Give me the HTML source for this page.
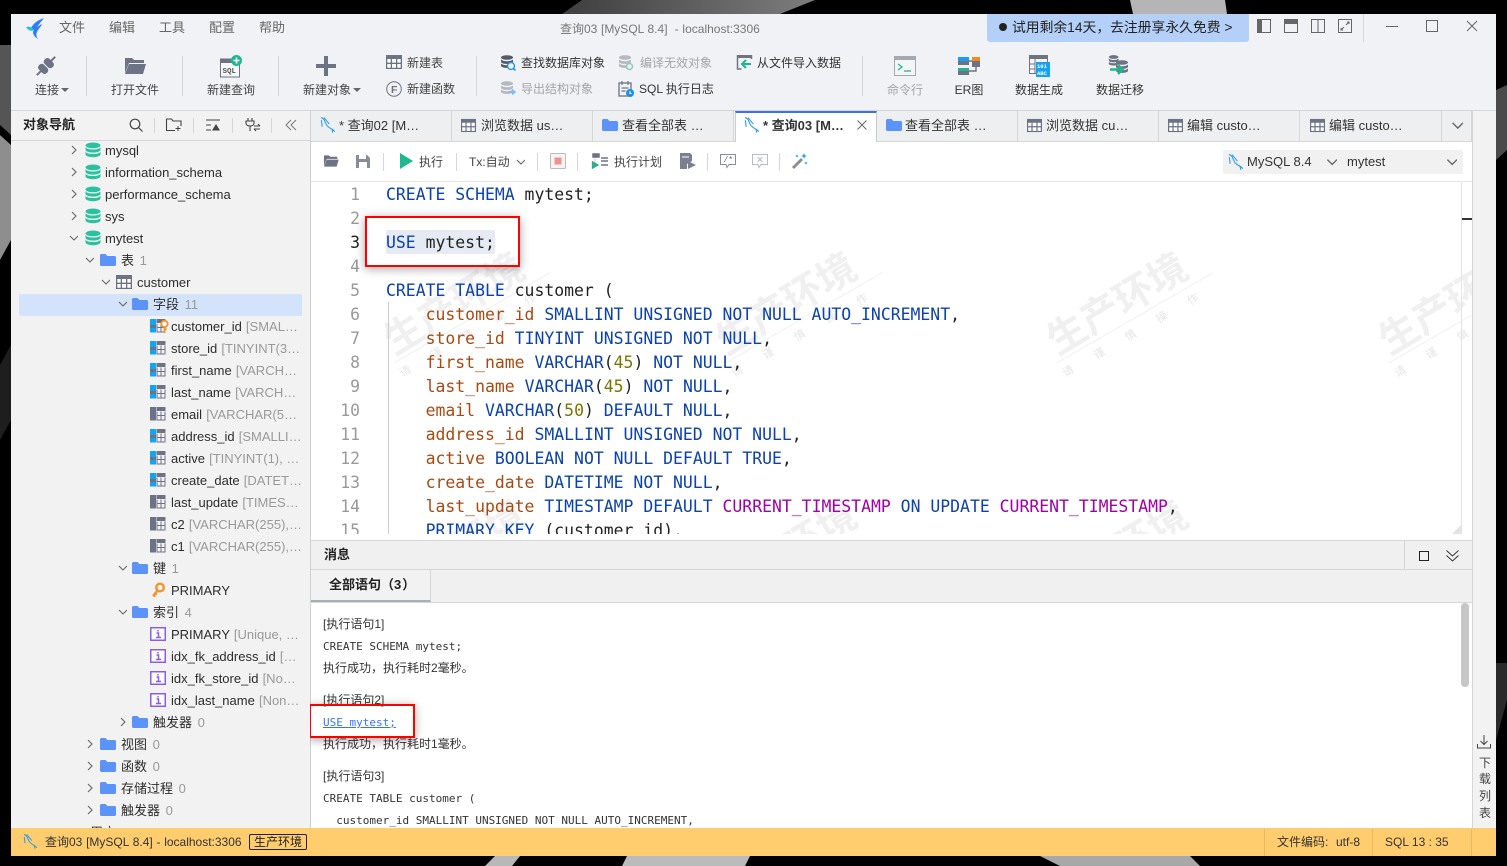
<!DOCTYPE html>
<html lang="zh"><head><meta charset="utf-8"><title>查询03</title>
<style>
*{box-sizing:border-box}
html,body{margin:0;padding:0;width:1507px;height:866px;overflow:hidden;background:#000}
body{font-family:"Liberation Sans","Noto Sans CJK TC",sans-serif;font-size:12px;color:#333;position:relative}
.t{position:absolute;white-space:nowrap;line-height:22px;height:22px}
.ic{position:absolute;overflow:visible}
.c{transform:translateX(-50%)}
.dv{position:absolute;width:1px;background:#d4d6da}
#win{position:absolute;left:11px;top:14px;width:1485px;height:842px;background:#f0f2f6;overflow:hidden}
#w{position:absolute;left:-11px;top:-14px;width:1507px;height:866px}
.lb{color:#444;font-size:12px}
.gr{color:#a2a4a8}
#side{position:absolute;left:11px;top:142px;width:299px;height:686px;background:#f2f2f2;overflow:hidden;font-size:13px;color:#333}
#side .t{color:#2c2c2c;margin-top:1px}
#side i{font-style:normal;color:#999;margin-left:.5px}
#side i.q{margin-left:2px}
.tab{position:absolute;top:111px;height:30px;width:141px;background:#eeeff1;border-right:1px solid #d6d6d6;font-size:13px;color:#333}
.tab span{position:absolute;left:28px;top:4px;line-height:22px;white-space:nowrap}
#ed{position:absolute;left:311px;top:183px;width:1161px;height:351px;background:#fff;overflow:hidden;font-family:"DejaVu Sans Mono",monospace;font-size:16.44px}
#ed .l{position:absolute;left:75px;height:24px;line-height:24px;white-space:pre;color:#222}
#ed .n{position:absolute;left:0;width:49px;text-align:right;height:24px;line-height:24px;color:#999}
.k{color:#0b42ab}.d{color:#a84a10}.m{color:#7c7400}.f{color:#a100a8}
.wm{position:absolute;font-size:39px;font-weight:bold;color:#f0f0f0;transform:rotate(-31deg);white-space:nowrap;font-family:"Liberation Sans","Noto Sans CJK SC",sans-serif;line-height:40px}
.ws{position:absolute;font-size:11px;color:#e6e6e6;transform:rotate(-30deg);white-space:nowrap;letter-spacing:25px;font-family:"Liberation Sans","Noto Sans CJK SC",sans-serif;border-top:1px solid #f0f0f0;padding-top:4px}
#msg{position:absolute;left:311px;top:603px;width:1161px;height:225px;background:#fff;overflow:hidden;color:#333}
#msg .t{left:12px;font-size:12px}
#msg .mo{font-family:"DejaVu Sans Mono",monospace;font-size:11px;white-space:pre;margin-top:1px}
.red{position:absolute;border:2px solid #f00;box-shadow:0 2px 9px rgba(0,0,0,.35)}
</style></head><body>
<svg width="0" height="0" style="position:absolute">
<defs>
<symbol id="folder" viewBox="0 0 16 16"><path d="M0 3.500C0 2.700.6 2 1.400 2h4.200l1.700 2h7.300c.8 0 1.400.6 1.400 1.400v7.200c0 .8-.6 1.400-1.400 1.400H1.400C.6 14 0 13.400 0 12.600z" fill="#5b93fb"/></symbol>
<symbol id="db" viewBox="0 0 16 16"><ellipse cx="8" cy="3.400" rx="7.500" ry="2.900" fill="#2cc19e"/><path d="M.5 5.200c1 1.500 3.800 2.300 7.500 2.300s6.500-.8 7.500-2.300v2.700c0 1.500-3.300 2.700-7.500 2.700S.5 9.400.5 7.900z" fill="#2cc19e"/><path d="M.5 9.700c1 1.500 3.800 2.300 7.500 2.300s6.500-.8 7.500-2.300v2.700c0 1.500-3.300 2.800-7.500 2.800S.5 13.900.5 12.400z" fill="#2cc19e"/></symbol>
<symbol id="grid" viewBox="0 0 16 16"><rect x="0" y="1" width="16" height="14" fill="#6d7285"/><path d="M1.300 5h3.400v3.600H1.300zM6 5h4v3.600H6zM11.300 5h3.400v3.600h-3.400zM1.300 10h3.400v3.700H1.300zM6 10h4v3.700H6zM11.300 10h3.400v3.700h-3.400z" fill="#fff"/></symbol>
<symbol id="fld" viewBox="0 0 16 16"><rect x="0" y="1" width="6" height="6" fill="#0fa6f5"/><rect x="0" y="7" width="6" height="3" fill="#6d7285"/><rect x="0" y="10" width="6" height="4.500" fill="#0fa6f5"/><rect x="6.500" y="1" width="9" height="4" fill="#6d7285"/><path d="M7 5.500v8.500h8v-8.500M11 5.500v8.500M7 9.500h8" stroke="#6d7285" fill="none"/></symbol>
<symbol id="fld2" viewBox="0 0 16 16"><rect x="0" y="1" width="6" height="13.500" fill="#6d7285"/><rect x="6.500" y="1" width="9" height="4" fill="#6d7285"/><path d="M7 5.500v8.500h8v-8.500M11 5.500v8.500M7 9.500h8" stroke="#6d7285" fill="none"/></symbol>
<symbol id="idx" viewBox="0 0 16 16"><rect x=".75" y="1.750" width="14.500" height="12.500" fill="#fff" stroke="#8a5cf0" stroke-width="1.500"/><path d="M6.500 7h2v4.500M6 11.500h5M8 4v1.500" stroke="#8a5cf0" stroke-width="1.500" fill="none"/></symbol>
<symbol id="key" viewBox="0 0 16 16"><circle cx="10" cy="5.500" r="3.800" fill="none" stroke="#f5932a" stroke-width="2.400"/><path d="M7.500 8.500L3 14M3.500 13.500l2 1M5.500 11.300l1.500 1" stroke="#f5932a" stroke-width="2.200" fill="none"/></symbol>
<symbol id="dol" viewBox="0 0 16 16"><path d="M1 1c1.200.3 2.300 1 3 2.300.8 1.700 1.400 3.600 2.600 5.200 1.200 1.500 3 2.600 4.600 3.400.9.500 1.900 1.200 2.700 2.400M3.800 1c1.600 2 3.200 4.200 5 6M1.200 3.500c.4 2 .8 4 .7 6.200M11.300 12l.7 3.200" stroke="#2a9be6" stroke-width="1" fill="none"/></symbol>
<symbol id="chd" viewBox="-1 0 10 10"><path d="M1 3l4 4 4-4" fill="none" stroke="#666" stroke-width="1.100"/></symbol>
<symbol id="chr" viewBox="-1 0 10 10"><path d="M3 1l4 4-4 4" fill="none" stroke="#666" stroke-width="1.100"/></symbol>
<symbol id="stack" viewBox="0 0 16 16"><ellipse cx="7" cy="2.500" rx="6" ry="2.300" fill="currentColor"/><path d="M1 4.500c1 1 3 1.700 6 1.700s5-.7 6-1.700v2.200c0 1.200-2.700 2.200-6 2.200s-6-1-6-2.200zM1 8.500c1 1 3 1.700 6 1.700s5-.7 6-1.700v2.200c0 1.200-2.700 2.200-6 2.200s-6-1-6-2.200z" fill="currentColor"/></symbol>
</defs></svg>

<!-- background shapes -->
<svg class="ic" style="left:0;top:0" width="1507" height="866">
<defs><linearGradient id="g1" x1="0" y1="0" x2="1" y2="0"><stop offset="0" stop-color="#3e3e3e"/><stop offset="1" stop-color="#7d7d7d"/></linearGradient></defs>
<polygon points="562,14 582,0 815,0 780,14" fill="url(#g1)"/>
<polygon points="1133,14 1130,0 1225,0 1227,14" fill="#b5b5b5"/>
<polygon points="485,866 495,856 520,856 512,866" fill="#b8b8b8"/>
<polygon points="622,866 627,856 750,856 745,866" fill="#bbb"/>
<polygon points="1040,856 1190,856 1200,866 1060,866" fill="#a8a8a8"/>
<polygon points="0,45 11,45 11,135 0,125" fill="#555"/>
<polygon points="0,135 11,145 11,240 0,260" fill="#8e8e8e"/>
<polygon points="0,365 11,345 11,420 0,440" fill="#1e1e1e"/>
<polygon points="1496,90 1507,85 1507,150 1496,160" fill="#4a4a4a"/>
<polygon points="1496,663 1507,663 1507,700 1496,740" fill="#2a2a2a"/>
</svg>

<div id="win"><div id="w">
<!-- title bar -->
<svg class="ic" style="left:25px;top:17px" width="20" height="22" viewBox="0 0 20 22"><path d="M19 1C13 3 7 7 6 12l4 2c2-5 6-9 9-13z" fill="#2f7df6"/><path d="M1 10c3-1 6 0 8 3-3 2-6 0-8-3z" fill="#20c4d8"/><path d="M17 7c-4 2-8 5-9 8 0 3 2 5 5 7-2-3-2-5-1-7 1-3 4-5 5-8z" fill="#2f7df6"/></svg>
<span class="t" style="left:59px;top:17px;font-size:13px;color:#666">文件</span>
<span class="t" style="left:109px;top:17px;font-size:13px;color:#666">编辑</span>
<span class="t" style="left:159px;top:17px;font-size:13px;color:#666">工具</span>
<span class="t" style="left:209px;top:17px;font-size:13px;color:#666">配置</span>
<span class="t" style="left:259px;top:17px;font-size:13px;color:#666">帮助</span>
<span class="t" style="left:560px;top:17px;font-size:12px;color:#777;margin-top:1px;word-spacing:.3px">查询03 [MySQL 8.4]&nbsp; - localhost:3306</span>
<div style="position:absolute;left:987px;top:14px;width:262px;height:28px;background:#b4d0f8;border-radius:0 0 3px 3px"></div>
<span class="t" style="left:999px;top:17px;font-size:13.800px;color:#222"><b style="display:inline-block;width:8px;height:8px;border-radius:50%;background:#222;margin-right:5px;vertical-align:1px"></b>试用剩余14天，去注册享永久免费 &gt;</span>
<svg class="ic" style="left:1257px;top:19px" width="14" height="14"><rect x=".5" y=".5" width="13" height="13" fill="none" stroke="#666"/><rect x="0" y="0" width="5" height="14" fill="#666"/></svg>
<svg class="ic" style="left:1284px;top:19px" width="14" height="14"><rect x=".5" y=".5" width="13" height="13" fill="none" stroke="#666"/><rect x="0" y="0" width="14" height="5" fill="#666"/></svg>
<svg class="ic" style="left:1311px;top:19px" width="14" height="14"><rect x=".5" y=".5" width="13" height="13" fill="none" stroke="#666"/><path d="M7 0v14" stroke="#666"/></svg>
<svg class="ic" style="left:1338px;top:19px" width="14" height="14"><rect x=".5" y=".5" width="13" height="13" fill="none" stroke="#666"/><path d="M8 6l3-3M9 3h2v2M6 8l-3 3M5 11H3V9" stroke="#666" fill="none"/></svg>
<div class="dv" style="left:1363px;top:14px;height:28px"></div>
<div style="position:absolute;left:1386px;top:26px;width:12px;height:1px;background:#666"></div>
<div style="position:absolute;left:1426px;top:20px;width:12px;height:12px;border:1.500px solid #666"></div>
<svg class="ic" style="left:1466px;top:20px" width="12" height="12"><path d="M1 1l10 10M11 1L1 11" stroke="#666" fill="none"/></svg>

<!-- main toolbar -->
<div class="dv" style="left:86px;top:56px;height:40px"></div>
<div class="dv" style="left:182px;top:56px;height:40px"></div>
<div class="dv" style="left:278px;top:56px;height:40px"></div>
<div class="dv" style="left:476px;top:56px;height:40px"></div>
<div class="dv" style="left:862px;top:56px;height:40px"></div>
<svg class="ic" style="left:35px;top:55px" width="22" height="22" viewBox="0 0 22 22"><g transform="rotate(-45 11 11)" fill="#6d7285"><rect x="3.500" y="5.500" width="7" height="11" rx="3"/><rect x="11.500" y="5.500" width="7" height="11" rx="3"/><rect x="-2" y="10" width="6" height="2"/><rect x="18" y="10" width="6" height="2"/></g></svg>
<span class="t lb" style="left:35px;top:79px">连接</span><svg class="ic" style="left:61px;top:88px" width="8" height="4"><path d="M0 0h8L4 4z" fill="#666"/></svg>
<svg class="ic" style="left:124px;top:56px" width="22" height="20" viewBox="0 0 22 20"><path d="M1 2h7l2 2h10v3H5L1 17z" fill="#6d7285"/><path d="M5 8h17l-3 10H1z" fill="#6d7285"/></svg>
<span class="t lb c" style="left:135px;top:79px">打开文件</span>
<svg class="ic" style="left:220px;top:55px" width="23" height="23" viewBox="0 0 23 23"><rect x=".5" y="4" width="19" height="18" fill="#f7f8fa" stroke="#6d7285"/><rect x="0" y="4" width="15" height="4" fill="#6d7285"/><text x="2.500" y="18" font-size="7.500" font-family="Liberation Mono" font-weight="bold" fill="#555">SQL</text><circle cx="16.500" cy="5.500" r="5.500" fill="#1fb78f"/><path d="M16.500 2.500v6M13.500 5.500h6" stroke="#fff" stroke-width="1.500"/></svg>
<span class="t lb c" style="left:231px;top:79px">新建查询</span>
<svg class="ic" style="left:316px;top:56px" width="20" height="20"><path d="M10 0v20M0 10h20" stroke="#6d7285" stroke-width="4"/></svg>
<span class="t lb" style="left:303px;top:79px">新建对象</span><svg class="ic" style="left:353px;top:88px" width="8" height="4"><path d="M0 0h8L4 4z" fill="#666"/></svg>
<svg class="ic" style="left:386px;top:54px" width="16" height="16"><use href="#grid"/></svg>
<span class="t lb" style="left:407px;top:52px">新建表</span>
<svg class="ic" style="left:386px;top:81px" width="16" height="16"><circle cx="8" cy="8" r="7.300" fill="none" stroke="#6d7285"/><text x="5" y="12" font-size="10.500" font-weight="bold" font-family="Liberation Sans" fill="#6d7285">F</text></svg>
<span class="t lb" style="left:407px;top:78px">新建函数</span>
<svg class="ic" style="left:500px;top:55px;color:#555a68" width="16" height="16"><use href="#stack"/><circle cx="11" cy="11" r="3.500" fill="#e8f4ff" stroke="#1a8fe8" stroke-width="1.300"/><path d="M13.500 13.500l2 2" stroke="#1a8fe8" stroke-width="1.500"/></svg>
<span class="t lb" style="left:521px;top:52px;color:#333">查找数据库对象</span>
<svg class="ic" style="left:618px;top:55px;color:#b6b9bf" width="16" height="16"><use href="#stack"/><circle cx="11.500" cy="11.500" r="3" fill="#f0f2f6" stroke="#8ec9b6" stroke-width="1.500"/></svg>
<span class="t lb gr" style="left:640px;top:52px">编译无效对象</span>
<svg class="ic" style="left:737px;top:55px" width="15" height="15"><path d="M14.500 4V1H.5v13h4" fill="none" stroke="#6d7285" stroke-width="1.500"/><rect x="0" y="0" width="15" height="3" fill="#6d7285"/><path d="M14 9H6M9 5L5 9l4 4" stroke="#1fb78f" stroke-width="2" fill="none"/></svg>
<span class="t lb" style="left:757px;top:52px;color:#333">从文件导入数据</span>
<svg class="ic" style="left:500px;top:81px;color:#b6b9bf" width="16" height="16"><use href="#stack"/><path d="M8 11h7M12 8.500l3 2.500-3 2.500" stroke="#7fbcf0" stroke-width="1.500" fill="none"/></svg>
<span class="t lb gr" style="left:521px;top:78px">导出结构对象</span>
<svg class="ic" style="left:618px;top:81px" width="16" height="16"><rect x="1" y="2" width="12" height="13" fill="none" stroke="#6d7285" stroke-width="1.300"/><path d="M4 0v4M10 0v4M3.500 7h7M3.500 10h4" stroke="#6d7285" stroke-width="1.200"/><circle cx="12" cy="12" r="4" fill="#1a8fe8"/><path d="M12 10v2.500h1.500" stroke="#fff" fill="none"/></svg>
<span class="t lb" style="left:639px;top:78px;color:#333">SQL 执行日志</span>
<svg class="ic" style="left:894px;top:56px" width="22" height="20"><rect x=".5" y=".5" width="21" height="19" fill="#f4f6f6" stroke="#a4a8b0"/><rect x="0" y="0" width="22" height="4" fill="#a4a8b0"/><path d="M4 8l4 3-4 3" stroke="#1fb78f" fill="none" stroke-width="1.300"/><path d="M10 15h7" stroke="#1fb78f" stroke-width="1.300"/></svg>
<span class="t lb gr c" style="left:905px;top:79px">命令行</span>
<svg class="ic" style="left:958px;top:56px" width="22" height="20"><rect x="0" y="1" width="11" height="8" fill="#6d7285"/><rect x="0" y="1" width="11" height="4" fill="#1a9df0"/><rect x="14" y="1" width="8" height="10" fill="#6d7285"/><rect x="14" y="1" width="8" height="4" fill="#f28a1e"/><rect x="0" y="12" width="11" height="7" fill="#6d7285"/><rect x="0" y="12" width="11" height="3" fill="#1fb78f"/><path d="M11 15h7v-4M11 5h3" stroke="#6d7285" fill="none" stroke-width="1.400"/></svg>
<span class="t lb c" style="left:969px;top:79px;color:#333">ER图</span>
<svg class="ic" style="left:1029px;top:55px" width="21" height="22"><rect x=".5" y=".5" width="18" height="18" fill="#f6f7f9" stroke="#6d7285"/><rect x="0" y="0" width="19" height="4" fill="#6d7285"/><path d="M6 4v14M1 9h5M1 14h5" stroke="#6d7285"/><rect x="7" y="7" width="14" height="15" fill="#14a2f5"/><text x="8" y="13" font-size="5.500" font-weight="bold" font-family="Liberation Mono" fill="#fff">101</text><text x="8" y="20" font-size="5.500" font-weight="bold" font-family="Liberation Mono" fill="#fff">ABC</text></svg>
<span class="t lb c" style="left:1039px;top:79px;color:#333">数据生成</span>
<svg class="ic" style="left:1108px;top:55px;color:#6d7285" width="23" height="22"><svg width="13" height="13" x="0" y="0"><use href="#stack"/></svg><svg width="16" height="18" x="7" y="4"><use href="#stack"/></svg><path d="M2 14.500h11M10 10l4.500 4.500L10 19" stroke="#1fb78f" stroke-width="2.500" fill="none"/></svg>
<span class="t lb c" style="left:1120px;top:79px;color:#333">数据迁移</span>

<div style="position:absolute;left:11px;top:110px;width:1485px;height:1px;background:#d6d6d6"></div>

<!-- sidebar header -->
<div style="position:absolute;left:11px;top:111px;width:299px;height:30px;background:#f2f2f2;border-bottom:1px solid #d6d6d6"></div>
<span class="t" style="left:23px;top:114px;font-size:13px;font-weight:bold;color:#222">对象导航</span>
<svg class="ic" style="left:129px;top:118px" width="14" height="14"><circle cx="6" cy="6" r="4.800" fill="none" stroke="#444" stroke-width="1.200"/><path d="M9.500 9.500l4 4" stroke="#444" stroke-width="1.200"/></svg>
<div class="dv" style="left:154px;top:118px;height:15px"></div>
<svg class="ic" style="left:166px;top:118px" width="16" height="14"><path d="M9 12.500H.5V1h5l1.500 2h8v5" fill="none" stroke="#444" stroke-width="1.100"/><path d="M12 8v5M9.500 10.500h5" stroke="#444"/></svg>
<div class="dv" style="left:193px;top:118px;height:15px"></div>
<svg class="ic" style="left:206px;top:119px" width="15" height="12"><path d="M0 1h14M0 6h5M0 11h5" stroke="#444"/><path d="M10 5l4 6.500H6z" fill="#444"/></svg>
<div class="dv" style="left:232px;top:118px;height:15px"></div>
<svg class="ic" style="left:245px;top:117px" width="15" height="16"><path d="M3 1v3M7 1v3M1 4h8v2c0 2-2 3-4 3S1 8 1 6zM5 9v5" stroke="#444" fill="none" stroke-width="1.100"/><path d="M9 9h6M13 7l2 2M15 12H9M11 14l-2-2" stroke="#444" fill="none"/></svg>
<div class="dv" style="left:271px;top:118px;height:15px"></div>
<svg class="ic" style="left:285px;top:119px" width="12" height="12"><path d="M6 1L1 6l5 5M11 1L6 6l5 5" stroke="#777" fill="none"/></svg>
<div style="position:absolute;left:310px;top:111px;width:1px;height:717px;background:#d0d0d0"></div>

<!-- tabs -->
<div class="tab" style="left:311px"><svg class="ic" style="left:9px;top:5px" width="17" height="18"><use href="#dol"/></svg><span>* 查询02 [M…</span></div>
<div class="tab" style="left:452px"><svg class="ic" style="left:9px;top:7px" width="15" height="15"><use href="#grid"/></svg><span style="left:29px">浏览数据 us…</span></div>
<div class="tab" style="left:593px"><svg class="ic" style="left:9px;top:6px" width="16" height="16"><use href="#folder"/></svg><span style="left:29px">查看全部表 …</span></div>
<div class="tab" style="left:735px;width:142px;background:#fff;border-right:1px solid #ccc;border-left:1px solid #ccc;border-top:2px solid #3b72e6;height:31px;font-weight:bold"><svg class="ic" style="left:8px;top:3px" width="17" height="18"><use href="#dol"/></svg><span style="top:2px;left:27px">* 查询03 [M…</span><svg class="ic" style="left:121px;top:7px" width="10" height="10"><path d="M.5.500l9 9M9.500.500l-9 9" stroke="#666" fill="none"/></svg></div>
<div class="tab" style="left:877px"><svg class="ic" style="left:9px;top:6px" width="16" height="16"><use href="#folder"/></svg><span>查看全部表 …</span></div>
<div class="tab" style="left:1018px"><svg class="ic" style="left:9px;top:7px" width="15" height="15"><use href="#grid"/></svg><span>浏览数据 cu…</span></div>
<div class="tab" style="left:1159px"><svg class="ic" style="left:9px;top:7px" width="15" height="15"><use href="#grid"/></svg><span>编辑 custo…</span></div>
<div class="tab" style="left:1301px"><svg class="ic" style="left:9px;top:7px" width="15" height="15"><use href="#grid"/></svg><span>编辑 custo…</span></div>
<div class="tab" style="left:1442px;width:30px;border-right:1px solid #d6d6d6"><svg class="ic" style="left:8px;top:8px" width="13" height="13" viewBox="0 0 10 10"><use href="#chd"/></svg></div>
<div style="position:absolute;left:311px;top:141px;width:424px;height:1px;background:#d6d6d6"></div>
<div style="position:absolute;left:877px;top:141px;width:595px;height:1px;background:#d6d6d6"></div>

<!-- query toolbar -->
<div style="position:absolute;left:311px;top:142px;width:1161px;height:40px;background:#fff;border-bottom:1px solid #e6e6e6"></div>
<svg class="ic" style="left:323px;top:154px" width="16" height="14" viewBox="0 0 22 20"><path d="M1 2h7l2 2h10v3H5L1 17z" fill="#6d7285"/><path d="M5 8h17l-3 10H1z" fill="#6d7285"/></svg>
<svg class="ic" style="left:356px;top:154px" width="14" height="14"><path d="M0 1h11l3 3v10H0z" fill="#888c99"/><rect x="3" y="1" width="7" height="4" fill="#fff"/><rect x="3" y="8" width="8" height="6" fill="#fff"/></svg>
<div class="dv" style="left:383px;top:153px;height:18px"></div>
<svg class="ic" style="left:400px;top:153px" width="13" height="16"><path d="M0 0l13 8-13 8z" fill="#1fb78f"/></svg>
<span class="t" style="left:419px;top:151px;color:#444">执行</span>
<div class="dv" style="left:456px;top:153px;height:18px"></div>
<span class="t" style="left:469px;top:151px;color:#444">Tx:自动</span>
<svg class="ic" style="left:515px;top:157px" width="10" height="10"><use href="#chd"/></svg>
<div class="dv" style="left:537px;top:153px;height:18px"></div>
<svg class="ic" style="left:550px;top:153px" width="16" height="16"><rect x=".5" y=".5" width="15" height="15" rx="1" fill="#f4f4f4" stroke="#bbb"/><rect x="4.500" y="4.500" width="7" height="7" fill="#f28f8f"/></svg>
<div class="dv" style="left:577px;top:153px;height:18px"></div>
<svg class="ic" style="left:592px;top:153px" width="17" height="16"><path d="M1 1h6v3H1zM9 5h7M9 8h7M9 12h7" stroke="#6d7285" fill="#6d7285" stroke-width="1.500"/><path d="M3 4v8M0 8l7 4-7 4z" fill="#1fb78f" stroke="#6d7285" stroke-width=".3"/></svg>
<span class="t" style="left:614px;top:151px;color:#444">执行计划</span>
<svg class="ic" style="left:680px;top:153px" width="16" height="16"><path d="M0 0h10l2 2v6l-5 3v5H0z" fill="#7b8090"/><path d="M8 8l8 4-8 4z" fill="#7b8090"/><path d="M2 4h7" stroke="#fff"/></svg>
<div class="dv" style="left:707px;top:153px;height:18px"></div>
<svg class="ic" style="left:720px;top:153px" width="16" height="16"><path d="M.5 1.500h15v10H9l-2 3-1-3H.5z" fill="none" stroke="#8a8e9a"/><text x="3.500" y="9" font-size="8" font-family="Liberation Mono" fill="#666">/*</text></svg>
<svg class="ic" style="left:752px;top:153px" width="16" height="16"><path d="M.5 1.500h15v10H9l-2 3-1-3H.5z" fill="none" stroke="#b8bbc4"/><path d="M5.500 4l5 5M10.500 4l-5 5" stroke="#b8bbc4"/></svg>
<div class="dv" style="left:779px;top:153px;height:18px"></div>
<svg class="ic" style="left:792px;top:153px" width="16" height="16"><path d="M1 15l9-9" stroke="#8a8e9a" stroke-width="3"/><path d="M12 0l.8 2.200L15 3l-2.200.8L12 6l-.8-2.200L9 3l2.200-.8zM5 1l.5 1.500L7 3l-1.500.5L5 5l-.5-1.500L3 3l1.500-.5zM14 8l.5 1.500L16 10l-1.500.5L14 12l-.5-1.500L12 10l1.500-.5z" fill="#1a9df0"/></svg>
<div style="position:absolute;left:1223px;top:150px;width:240px;height:24px;background:#f1f1f1;border-radius:2px"></div>
<svg class="ic" style="left:1228px;top:153px" width="17" height="18"><use href="#dol"/></svg>
<span class="t" style="left:1247px;top:151px;font-size:13px;color:#333">MySQL 8.4</span>
<svg class="ic" style="left:1325px;top:156px" width="12" height="12" viewBox="0 0 10 10"><use href="#chd"/></svg>
<span class="t" style="left:1347px;top:151px;font-size:13px;color:#333">mytest</span>
<svg class="ic" style="left:1445px;top:156px" width="12" height="12" viewBox="0 0 10 10"><use href="#chd"/></svg>

<!-- editor -->
<div id="ed">
<div class="wm" style="left:66px;top:102px">生产环境</div>
<div class="wm" style="left:398px;top:102px">生产环境</div>
<div class="wm" style="left:729px;top:102px">生产环境</div>
<div class="wm" style="left:1061px;top:102px">生产环境</div>
<div class="wm" style="left:66px;top:350px">生产环境</div>
<div class="wm" style="left:398px;top:350px">生产环境</div>
<div class="wm" style="left:729px;top:350px">生产环境</div>
<div class="ws" style="left:76px;top:133px">请谨慎操作</div>
<div class="ws" style="left:408px;top:133px">请谨慎操作</div>
<div class="ws" style="left:739px;top:133px">请谨慎操作</div>
<div class="ws" style="left:1071px;top:133px">请谨慎操作</div>
<div style="position:absolute;left:75px;top:47px;width:109px;height:24px;background:#e6ebf3;border-radius:2px"></div>
<div style="position:absolute;left:77px;top:119px;width:1px;height:232px;background:#ccc"></div>
<div class="n" style="top:0">1</div><div class="l" style="top:0"><span class="k">CREATE SCHEMA</span> mytest;</div>
<div class="n" style="top:24px">2</div>
<div class="n" style="top:48px;color:#222">3</div><div class="l" style="top:48px"><span class="k">USE</span> mytest;</div>
<div class="n" style="top:72px">4</div>
<div class="n" style="top:96px">5</div><div class="l" style="top:96px"><span class="k">CREATE TABLE</span> customer (</div>
<div class="n" style="top:120px">6</div><div class="l" style="top:120px">    <span class="d">customer_id</span> <span class="k">SMALLINT UNSIGNED NOT NULL AUTO_INCREMENT</span>,</div>
<div class="n" style="top:144px">7</div><div class="l" style="top:144px">    <span class="d">store_id</span> <span class="k">TINYINT UNSIGNED NOT NULL</span>,</div>
<div class="n" style="top:168px">8</div><div class="l" style="top:168px">    <span class="d">first_name</span> <span class="k">VARCHAR</span>(<span class="m">45</span>) <span class="k">NOT NULL</span>,</div>
<div class="n" style="top:192px">9</div><div class="l" style="top:192px">    <span class="d">last_name</span> <span class="k">VARCHAR</span>(<span class="m">45</span>) <span class="k">NOT NULL</span>,</div>
<div class="n" style="top:216px">10</div><div class="l" style="top:216px">    <span class="d">email</span> <span class="k">VARCHAR</span>(<span class="m">50</span>) <span class="k">DEFAULT NULL</span>,</div>
<div class="n" style="top:240px">11</div><div class="l" style="top:240px">    <span class="d">address_id</span> <span class="k">SMALLINT UNSIGNED NOT NULL</span>,</div>
<div class="n" style="top:264px">12</div><div class="l" style="top:264px">    <span class="d">active</span> <span class="k">BOOLEAN NOT NULL DEFAULT TRUE</span>,</div>
<div class="n" style="top:288px">13</div><div class="l" style="top:288px">    <span class="d">create_date</span> <span class="k">DATETIME NOT NULL</span>,</div>
<div class="n" style="top:312px">14</div><div class="l" style="top:312px">    <span class="d">last_update</span> <span class="k">TIMESTAMP DEFAULT</span> <span class="f">CURRENT_TIMESTAMP</span> <span class="k">ON UPDATE</span> <span class="f">CURRENT_TIMESTAMP</span>,</div>
<div class="n" style="top:336px">15</div><div class="l" style="top:336px">    <span class="k">PRIMARY KEY</span> (customer_id),</div>
<div style="position:absolute;left:1150px;top:0;width:1px;height:351px;background:#e4e4e4"></div>
<div style="position:absolute;left:1151px;top:35px;width:10px;height:2px;background:#333"></div>
<svg class="ic" style="left:1141px;top:342px" width="9" height="9"><path d="M9 0v9H0z" fill="#e4e4e4"/></svg>
</div>
<div style="position:absolute;left:311px;top:182px;width:1161px;height:1px;background:#fff"></div>
<div style="position:absolute;left:311px;top:534px;width:1161px;height:7px;background:#fff"></div>
<div class="red" style="left:365px;top:216px;width:155px;height:51px"></div>

<!-- message panel -->
<div style="position:absolute;left:311px;top:540px;width:1161px;height:30px;background:#f0f0f0;border-top:1px solid #d6d6d6;border-bottom:1px solid #d6d6d6"></div>
<span class="t" style="left:324px;top:544px;font-weight:bold;font-size:13px;color:#222">消息</span>
<div class="dv" style="left:1404px;top:541px;height:28px"></div>
<div style="position:absolute;left:1419px;top:551px;width:10px;height:10px;border:1.300px solid #222"></div>
<svg class="ic" style="left:1446px;top:550px" width="13" height="12"><path d="M.5.500L6.500 6l6-5.500M.5 5.500L6.500 11l6-5.500" stroke="#333" fill="none"/></svg>
<div style="position:absolute;left:311px;top:570px;width:1161px;height:33px;background:#f0f0f0;border-bottom:1px solid #d6d6d6"></div>
<div style="position:absolute;left:311px;top:570px;width:120px;height:32px;background:#f2f2f2;border-right:1px solid #d6d6d6;border-bottom:2px solid #a9adba"></div>
<span class="t" style="left:329px;top:574px;font-weight:bold;font-size:13px;color:#222">全部语句（<span style="letter-spacing:1px">3</span>）</span>
<div id="msg">
<span class="t" style="top:10px">[执行语句1]</span>
<span class="t mo" style="top:32px">CREATE SCHEMA mytest;</span>
<span class="t" style="top:54px">执行成功，执行耗时2毫秒。</span>
<span class="t" style="top:86px">[执行语句2]</span>
<span class="t mo" style="top:108px;color:#3a73f0;text-decoration:underline">USE mytest;</span>
<span class="t" style="top:130px">执行成功，执行耗时1毫秒。</span>
<span class="t" style="top:162px">[执行语句3]</span>
<span class="t mo" style="top:184px">CREATE TABLE customer (</span>
<span class="t mo" style="top:206px">  customer_id SMALLINT UNSIGNED NOT NULL AUTO_INCREMENT,</span>
<div style="position:absolute;left:1150px;top:0;width:8px;height:84px;background:#c6c6c6;border-radius:4px"></div>
</div>
<div class="red" style="left:309px;top:704px;width:106px;height:34px"></div>

<!-- right strip -->
<div style="position:absolute;left:1472px;top:111px;width:24px;height:717px;background:#f2f2f2;border-left:1px solid #d6d6d6"></div>
<svg class="ic" style="left:1477px;top:735px" width="14" height="14"><path d="M7 0v9M3.500 6L7 9.500 10.500 6" stroke="#444" fill="none"/><path d="M.5 9v4h13V9" stroke="#444" fill="none"/></svg>
<span class="t c" style="left:1485px;top:752px;color:#444">下</span>
<span class="t c" style="left:1485px;top:768px;color:#444">载</span>
<span class="t c" style="left:1485px;top:785px;color:#444">列</span>
<span class="t c" style="left:1485px;top:802px;color:#444">表</span>

<!-- sidebar tree -->
<div id="side">
<svg class="ic" style="left:57px;top:3px" width="10" height="10"><use href="#chr"/></svg><svg class="ic" style="left:74px;top:0" width="16" height="16"><use href="#db"/></svg><span class="t" style="left:94px;top:-3px">mysql</span>
<svg class="ic" style="left:57px;top:25px" width="10" height="10"><use href="#chr"/></svg><svg class="ic" style="left:74px;top:22px" width="16" height="16"><use href="#db"/></svg><span class="t" style="left:94px;top:19px">information_schema</span>
<svg class="ic" style="left:57px;top:47px" width="10" height="10"><use href="#chr"/></svg><svg class="ic" style="left:74px;top:44px" width="16" height="16"><use href="#db"/></svg><span class="t" style="left:94px;top:41px">performance_schema</span>
<svg class="ic" style="left:57px;top:69px" width="10" height="10"><use href="#chr"/></svg><svg class="ic" style="left:74px;top:66px" width="16" height="16"><use href="#db"/></svg><span class="t" style="left:94px;top:63px">sys</span>
<svg class="ic" style="left:57px;top:91px" width="10" height="10"><use href="#chd"/></svg><svg class="ic" style="left:74px;top:88px" width="16" height="16"><use href="#db"/></svg><span class="t" style="left:94px;top:85px">mytest</span>
<svg class="ic" style="left:73px;top:113px" width="10" height="10"><use href="#chd"/></svg><svg class="ic" style="left:89px;top:110px" width="16" height="16"><use href="#folder"/></svg><span class="t" style="left:110px;top:107px">表 <i class="q">1</i></span>
<svg class="ic" style="left:89px;top:135px" width="10" height="10"><use href="#chd"/></svg><svg class="ic" style="left:105px;top:132px" width="16" height="16"><use href="#grid"/></svg><span class="t" style="left:126px;top:129px">customer</span>
<div style="position:absolute;left:8px;top:152px;width:283px;height:22px;background:#d4e3fc;border-radius:2px"></div>
<svg class="ic" style="left:106px;top:157px" width="10" height="10"><use href="#chd"/></svg><svg class="ic" style="left:121px;top:154px" width="16" height="16"><use href="#folder"/></svg><span class="t" style="left:142px;top:151px">字段 <i class="q">11</i></span>
<svg class="ic" style="left:139px;top:176px" width="16" height="16"><use href="#fld"/></svg><svg class="ic" style="left:149px;top:178px" width="9" height="14" viewBox="5 1 10 15"><circle cx="10" cy="5" r="3.500" fill="#fff" stroke="#f5932a" stroke-width="2"/><path d="M10 8v7M10 11h2.500" stroke="#f5932a" stroke-width="2"/></svg><span class="t" style="left:160px;top:173px">customer_id <i>[SMAL…</i></span>
<svg class="ic" style="left:139px;top:198px" width="16" height="16"><use href="#fld"/></svg><span class="t" style="left:160px;top:195px">store_id <i>[TINYINT(3…</i></span>
<svg class="ic" style="left:139px;top:220px" width="16" height="16"><use href="#fld"/></svg><span class="t" style="left:160px;top:217px">first_name <i>[VARCH…</i></span>
<svg class="ic" style="left:139px;top:242px" width="16" height="16"><use href="#fld"/></svg><span class="t" style="left:160px;top:239px">last_name <i>[VARCH…</i></span>
<svg class="ic" style="left:139px;top:264px" width="16" height="16"><use href="#fld2"/></svg><span class="t" style="left:160px;top:261px">email <i>[VARCHAR(5…</i></span>
<svg class="ic" style="left:139px;top:286px" width="16" height="16"><use href="#fld"/></svg><span class="t" style="left:160px;top:283px">address_id <i>[SMALLI…</i></span>
<svg class="ic" style="left:139px;top:308px" width="16" height="16"><use href="#fld"/></svg><span class="t" style="left:160px;top:305px">active <i>[TINYINT(1), …</i></span>
<svg class="ic" style="left:139px;top:330px" width="16" height="16"><use href="#fld"/></svg><span class="t" style="left:160px;top:327px">create_date <i>[DATET…</i></span>
<svg class="ic" style="left:139px;top:352px" width="16" height="16"><use href="#fld2"/></svg><span class="t" style="left:160px;top:349px">last_update <i>[TIMES…</i></span>
<svg class="ic" style="left:139px;top:374px" width="16" height="16"><use href="#fld2"/></svg><span class="t" style="left:160px;top:371px">c2 <i>[VARCHAR(255),…</i></span>
<svg class="ic" style="left:139px;top:396px" width="16" height="16"><use href="#fld2"/></svg><span class="t" style="left:160px;top:393px">c1 <i>[VARCHAR(255),…</i></span>
<svg class="ic" style="left:106px;top:421px" width="10" height="10"><use href="#chd"/></svg><svg class="ic" style="left:121px;top:418px" width="16" height="16"><use href="#folder"/></svg><span class="t" style="left:142px;top:415px">键 <i class="q">1</i></span>
<svg class="ic" style="left:139px;top:440px" width="16" height="16"><use href="#key"/></svg><span class="t" style="left:160px;top:437px">PRIMARY</span>
<svg class="ic" style="left:106px;top:465px" width="10" height="10"><use href="#chd"/></svg><svg class="ic" style="left:121px;top:462px" width="16" height="16"><use href="#folder"/></svg><span class="t" style="left:142px;top:459px">索引 <i class="q">4</i></span>
<svg class="ic" style="left:139px;top:484px" width="16" height="16"><use href="#idx"/></svg><span class="t" style="left:160px;top:481px">PRIMARY <i>[Unique, …</i></span>
<svg class="ic" style="left:139px;top:506px" width="16" height="16"><use href="#idx"/></svg><span class="t" style="left:160px;top:503px">idx_fk_address_id <i>[…</i></span>
<svg class="ic" style="left:139px;top:528px" width="16" height="16"><use href="#idx"/></svg><span class="t" style="left:160px;top:525px">idx_fk_store_id <i>[No…</i></span>
<svg class="ic" style="left:139px;top:550px" width="16" height="16"><use href="#idx"/></svg><span class="t" style="left:160px;top:547px">idx_last_name <i>[Non…</i></span>
<svg class="ic" style="left:106px;top:575px" width="10" height="10"><use href="#chr"/></svg><svg class="ic" style="left:121px;top:572px" width="16" height="16"><use href="#folder"/></svg><span class="t" style="left:142px;top:569px">触发器 <i class="q">0</i></span>
<svg class="ic" style="left:73px;top:597px" width="10" height="10"><use href="#chr"/></svg><svg class="ic" style="left:89px;top:594px" width="16" height="16"><use href="#folder"/></svg><span class="t" style="left:110px;top:591px">视图 <i class="q">0</i></span>
<svg class="ic" style="left:73px;top:619px" width="10" height="10"><use href="#chr"/></svg><svg class="ic" style="left:89px;top:616px" width="16" height="16"><use href="#folder"/></svg><span class="t" style="left:110px;top:613px">函数 <i class="q">0</i></span>
<svg class="ic" style="left:73px;top:641px" width="10" height="10"><use href="#chr"/></svg><svg class="ic" style="left:89px;top:638px" width="16" height="16"><use href="#folder"/></svg><span class="t" style="left:110px;top:635px">存储过程 <i class="q">0</i></span>
<svg class="ic" style="left:73px;top:663px" width="10" height="10"><use href="#chr"/></svg><svg class="ic" style="left:89px;top:660px" width="16" height="16"><use href="#folder"/></svg><span class="t" style="left:110px;top:657px">触发器 <i class="q">0</i></span>
<svg class="ic" style="left:57px;top:685px" width="16" height="16"><use href="#folder"/></svg><span class="t" style="left:79px;top:679px">用户</span>
</div>

<!-- status bar -->
<div style="position:absolute;left:11px;top:828px;width:1485px;height:28px;background:#ffcd6e"></div>
<svg class="ic" style="left:23px;top:833px" width="16" height="17"><use href="#dol"/></svg>
<span class="t" style="left:45px;top:831px;color:#333;word-spacing:.4px">查询03 [MySQL 8.4] - localhost:3306</span>
<span style="position:absolute;left:249px;top:834px;width:58px;height:16px;border:1px solid #222;border-radius:2px;text-align:center;line-height:14px;font-size:12px;color:#222">生产环境</span>
<div class="dv" style="left:1264px;top:829px;height:27px;background:#e8b95e"></div>
<div class="dv" style="left:1372px;top:829px;height:27px;background:#e8b95e"></div>
<div class="dv" style="left:1471px;top:829px;height:27px;background:#e8b95e"></div>
<span class="t" style="left:1277px;top:831px;color:#333;word-spacing:.5px">文件编码:&nbsp; utf-8</span>
<span class="t" style="left:1385px;top:831px;color:#333">SQL 13 : 35</span>
</div></div>
</body></html>
